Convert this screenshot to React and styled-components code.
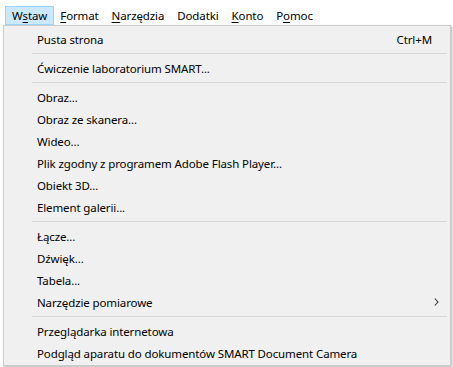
import React from "react";
import styled, { createGlobalStyle } from "styled-components";

const Global = createGlobalStyle`
  html, body { margin: 0; padding: 0; background: #ffffff; }
  body { font-family: "Noto Sans", "Segoe UI", sans-serif; font-size: 11.5px; letter-spacing: -0.12px; color: #000; }
`;

const Page = styled.div`
  width: 453px;
  height: 367px;
  overflow: hidden;
  background: #ffffff;
`;

const MenuBar = styled.div`
  display: flex;
  align-items: flex-start;
  height: 19px;
  padding: 6px 0 0 5px;
`;

const BarItem = styled.div`
  box-sizing: border-box;
  height: 19px;
  padding: 0 6px;
  margin-right: ${(p) => p.$gap}px;
  display: flex;
  align-items: center;
  border: 1px solid ${(p) => (p.$active ? "#99d1ff" : "transparent")};
  background: ${(p) => (p.$active ? "#cce8ff" : "transparent")};
  white-space: nowrap;
  line-height: 1;
`;

const U = styled.span`
  text-decoration: underline;
  text-underline-offset: 2px;
`;

const Dropdown = styled.div`
  box-sizing: border-box;
  margin-left: 3px;
  width: 448px;
  height: 341px;
  background: #f0f0f0;
  border: 1px solid #cccccc;
  box-shadow: 1px 1px 2px rgba(0, 0, 0, 0.3);
  padding: 2px 2px 1px 2px;
  display: flex;
  flex-direction: column;
`;

const Item = styled.div`
  height: 22px;
  display: flex;
  align-items: center;
  padding: 0 0 0 31px;
  white-space: nowrap;
`;

const Label = styled.span`
  flex: 1;
`;

const Shortcut = styled.span`
  padding-right: 16px;
`;

const Arrow = styled.svg`
  width: 5px;
  height: 8px;
  margin-right: 9px;
`;

const Separator = styled.div`
  height: 7px;
  display: flex;
  align-items: center;
  padding-left: 26px;
  padding-right: 1px;
  &::after {
    content: "";
    flex: 1;
    height: 1px;
    background: #d7d7d7;
  }
`;

const bar = [
  { pre: "W", u: "s", post: "taw", active: true, gap: -1 },
  { pre: "", u: "F", post: "ormat", gap: -1 },
  { pre: "", u: "N", post: "arzędzia", gap: -1 },
  { pre: "Dodatki", u: "", post: "", gap: -1 },
  { pre: "", u: "K", post: "onto", gap: -1 },
  { pre: "P", u: "o", post: "moc", gap: 0 },
];

const menu = [
  { label: "Pusta strona", shortcut: "Ctrl+M" },
  "sep",
  { label: "Ćwiczenie laboratorium SMART..." },
  "sep",
  { label: "Obraz..." },
  { label: "Obraz ze skanera..." },
  { label: "Wideo..." },
  { label: "Plik zgodny z programem Adobe Flash Player..." },
  { label: "Obiekt 3D..." },
  { label: "Element galerii..." },
  "sep",
  { label: "Łącze..." },
  { label: "Dźwięk..." },
  { label: "Tabela..." },
  { label: "Narzędzie pomiarowe", sub: true },
  "sep",
  { label: "Przeglądarka internetowa" },
  { label: "Podgląd aparatu do dokumentów SMART Document Camera" },
];

export default function App() {
  return (
    <Page>
      <Global />
      <MenuBar>
        {bar.map((b, i) => (
          <BarItem key={i} $active={b.active} $gap={b.gap}>
            {b.pre}
            {b.u && <U>{b.u}</U>}
            {b.post}
          </BarItem>
        ))}
      </MenuBar>
      <Dropdown>
        {menu.map((m, i) =>
          m === "sep" ? (
            <Separator key={i} />
          ) : (
            <Item key={i}>
              <Label>{m.label}</Label>
              {m.shortcut && <Shortcut>{m.shortcut}</Shortcut>}
              {m.sub && (
                <Arrow viewBox="0 0 5 8">
                  <path d="M0.8 0.5 L4 4 L0.8 7.5" fill="none" stroke="#333" strokeWidth="1.1" />
                </Arrow>
              )}
            </Item>
          )
        )}
      </Dropdown>
    </Page>
  );
}
